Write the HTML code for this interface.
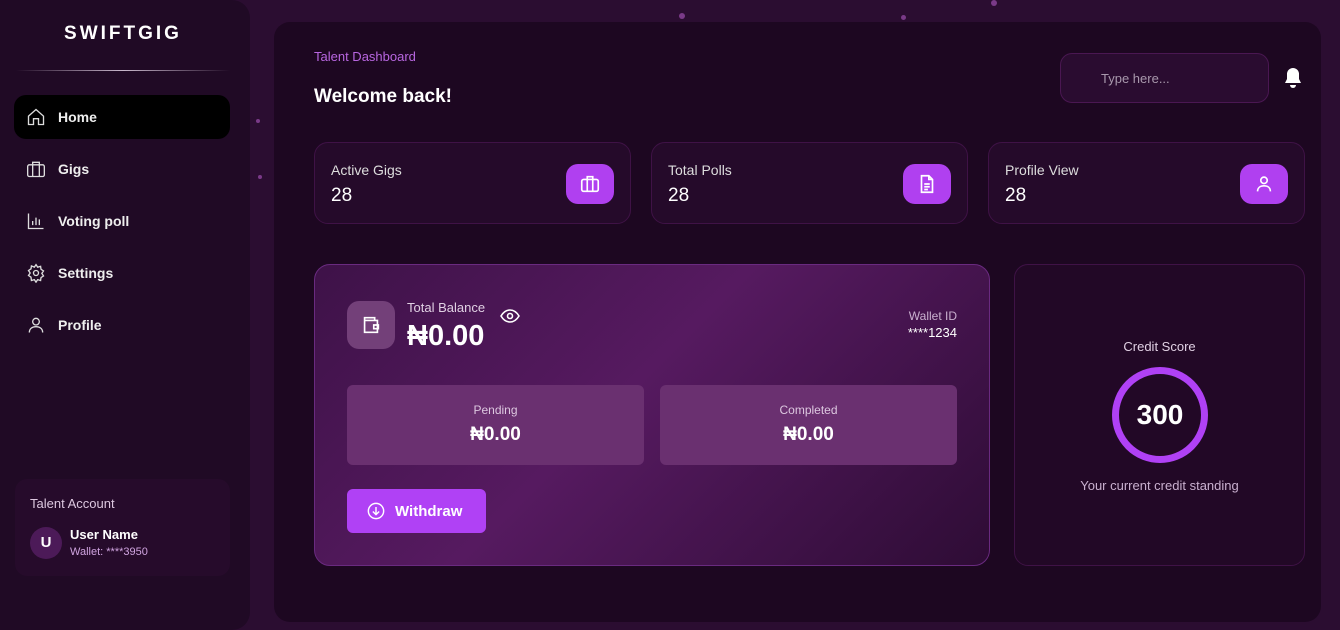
<!DOCTYPE html>
<html><head><style>
*{box-sizing:border-box;margin:0;padding:0}
body{width:1340px;height:597px;overflow:hidden;background:#2b0d31;font-family:"Liberation Sans",sans-serif;color:#fff;position:relative}
.side{position:absolute;left:0;top:0;width:250px;height:630px;background:#200a25;border-radius:0 18px 18px 0}
.logo{position:absolute;top:23px;left:0;width:246px;text-align:center;font-weight:bold;font-size:19px;letter-spacing:3px}
.line{position:absolute;top:70px;left:16px;width:214px;height:1px;background:linear-gradient(90deg,transparent,#c9b8cc,transparent)}
.nav{position:absolute;left:14px;width:216px;height:44px;border-radius:12px;display:flex;align-items:center;padding-left:12px;font-weight:bold;font-size:14px;color:#eee}
.nav svg{width:20px;height:20px;margin-right:12px;fill:none;stroke:#ddd;stroke-width:1.6}
.acct{position:absolute;left:15px;top:479px;width:215px;height:97px;background:#260b2b;border-radius:12px}
.main{position:absolute;left:274px;top:22px;width:1047px;height:600px;background:#1d0721;border-radius:16px}
.card{position:absolute;border:1px solid #3f1246;border-radius:14px;background:#250a2a}
.ic{position:absolute;width:48px;height:40px;border-radius:12px;background:#b040f0;display:flex;align-items:center;justify-content:center}
.ic svg{width:22px;height:22px;fill:none;stroke:#fff;stroke-width:1.8}
.dot{position:absolute;border-radius:50%;background:#7a3a88}
</style></head><body>
<div class="dot" style="left:679px;top:13px;width:6px;height:6px"></div>
<div class="dot" style="left:901px;top:15px;width:5px;height:5px"></div>
<div class="dot" style="left:991px;top:0px;width:6px;height:6px"></div>
<div class="dot" style="left:256px;top:119px;width:4px;height:4px"></div>
<div class="dot" style="left:258px;top:175px;width:4px;height:4px"></div>
<div class="side">
<div class="logo">SWIFTGIG</div>
<div class="line"></div>
<div class="nav" style="top:95px;background:#000"><svg viewBox="0 0 24 24"><path d="M3 11l9-8 9 8v10h-6v-7H9v7H3z"/></svg>Home</div>
<div class="nav" style="top:147px"><svg viewBox="0 0 24 24"><rect x="2" y="7" width="20" height="14" rx="2"/><path d="M8 7V4h8v3M8 7v14M16 7v14"/></svg>Gigs</div>
<div class="nav" style="top:199px"><svg viewBox="0 0 24 24"><path d="M3 3v18h18M8 17v-5M12 17V8M16 17v-7"/></svg>Voting poll</div>
<div class="nav" style="top:251px"><svg viewBox="0 0 24 24"><circle cx="12" cy="12" r="3"/><path d="M12 2l2 3 3.5-1 .5 3.5 3 2-2 3 2 3-3 2-.5 3.5-3.5-1-2 3-2-3-3.5 1L6 17l-3-2 2-3-2-3 3-2 .5-3.5L10 5z"/></svg>Settings</div>
<div class="nav" style="top:303px"><svg viewBox="0 0 24 24"><circle cx="12" cy="8" r="4"/><path d="M4 21c0-5 4-7 8-7s8 2 8 7"/></svg>Profile</div>
<div class="acct">
<div style="position:absolute;left:15px;top:17px;font-size:13px;color:#ddc8e0">Talent Account</div>
<div style="position:absolute;left:15px;top:48px;width:32px;height:32px;border-radius:50%;background:#4c1a58;text-align:center;line-height:32px;font-weight:bold;font-size:15px">U</div>
<div style="position:absolute;left:55px;top:48px;font-weight:bold;font-size:13px">User Name</div>
<div style="position:absolute;left:55px;top:67px;font-size:11px;color:#d0a4e0">Wallet: ****3950</div>
</div>
</div>
<div class="main">
<div style="position:absolute;left:40px;top:27px;font-size:13px;color:#b866e0">Talent Dashboard</div>
<div style="position:absolute;left:40px;top:64px;font-size:19px;font-weight:bold">Welcome back!</div>
<div style="position:absolute;left:786px;top:31px;width:209px;height:50px;border:1px solid #4a1752;border-radius:12px;background:#2a0c30;padding:17px 0 0 40px;font-size:13px;color:#a898ac">Type here...</div>
<svg style="position:absolute;left:1009px;top:45px" width="20" height="22" viewBox="0 0 20 22"><path d="M10 1a6 6 0 0 0-6 6v5l-2 4h16l-2-4V7a6 6 0 0 0-6-6z" fill="#fff"/><path d="M7 18a3 3 0 0 0 6 0z" fill="#fff"/></svg>
<div class="card" style="left:40px;top:120px;width:317px;height:82px"><div style="position:absolute;left:16px;top:19px;font-size:14px;color:#ddd">Active Gigs</div><div style="position:absolute;left:16px;top:42px;font-size:19px">28</div><div class="ic" style="left:251px;top:21px"><svg viewBox="0 0 24 24"><rect x="3" y="7" width="18" height="13" rx="2"/><path d="M9 7V4h6v3M9 7v13M15 7v13"/></svg></div></div>
<div class="card" style="left:377px;top:120px;width:317px;height:82px"><div style="position:absolute;left:16px;top:19px;font-size:14px;color:#ddd">Total Polls</div><div style="position:absolute;left:16px;top:42px;font-size:19px">28</div><div class="ic" style="left:251px;top:21px"><svg viewBox="0 0 24 24"><path d="M6 3h8l4 4v14H6z M14 3v4h4M9 12h6M9 15h6M9 18h4"/></svg></div></div>
<div class="card" style="left:714px;top:120px;width:317px;height:82px"><div style="position:absolute;left:16px;top:19px;font-size:14px;color:#ddd">Profile View</div><div style="position:absolute;left:16px;top:42px;font-size:19px">28</div><div class="ic" style="left:251px;top:21px"><svg viewBox="0 0 24 24"><circle cx="12" cy="8" r="3.5"/><path d="M5 20c0-4 3-6 7-6s7 2 7 6"/></svg></div></div>
<div style="position:absolute;left:40px;top:242px;width:676px;height:302px;border:1px solid #6a2a80;border-radius:16px;background:linear-gradient(135deg,#3e1248,#561a60 45%,#2e0c35)">
<div style="position:absolute;left:32px;top:36px;width:48px;height:48px;border-radius:12px;background:#734079;display:flex;align-items:center;justify-content:center"><svg width="22" height="22" viewBox="0 0 24 24" fill="none" stroke="#fff" stroke-width="1.8"><path d="M5 4h11v3H5zM5 7h14v13H5zM15 12h5v4h-5z"/></svg></div>
<div style="position:absolute;left:92px;top:35px;font-size:13px;color:#e0d0e3">Total Balance</div>
<div style="position:absolute;left:92px;top:55px;font-size:29px;font-weight:bold">₦0.00</div>
<svg style="position:absolute;left:185px;top:43px" width="20" height="16" viewBox="0 0 20 16" fill="none" stroke="#fff" stroke-width="1.6"><path d="M1 8c3-5 6-6 9-6s6 1 9 6c-3 5-6 6-9 6s-6-1-9-6z"/><circle cx="10" cy="8" r="2.5"/></svg>
<div style="position:absolute;right:32px;top:44px;font-size:12px;color:#c9b0cf">Wallet ID</div>
<div style="position:absolute;right:32px;top:60px;font-size:13px">****1234</div>
<div style="position:absolute;left:32px;top:120px;width:297px;height:80px;border-radius:6px;background:#6a3070;text-align:center"><div style="margin-top:18px;font-size:12px;color:#ddc8e0">Pending</div><div style="margin-top:7px;font-size:19px;font-weight:bold">₦0.00</div></div>
<div style="position:absolute;left:345px;top:120px;width:297px;height:80px;border-radius:6px;background:#6a3070;text-align:center"><div style="margin-top:18px;font-size:12px;color:#ddc8e0">Completed</div><div style="margin-top:7px;font-size:19px;font-weight:bold">₦0.00</div></div>
<div style="position:absolute;left:32px;top:224px;width:139px;height:44px;border-radius:6px;background:#b041f5;display:flex;align-items:center;padding-left:20px;font-weight:bold;font-size:15px"><svg width="18" height="18" viewBox="0 0 20 20" fill="none" stroke="#fff" stroke-width="1.6" style="margin-right:10px"><circle cx="10" cy="10" r="8.5"/><path d="M10 5.5v8M6.5 10.5l3.5 3.5 3.5-3.5"/></svg>Withdraw</div>
</div>
<div class="card" style="left:740px;top:242px;width:291px;height:302px;background:#220826">
<div style="position:absolute;top:74px;width:100%;text-align:center;font-size:13px;color:#e0d0e3">Credit Score</div>
<div style="position:absolute;left:97px;top:102px;width:96px;height:96px;border-radius:50%;border:7px solid #b041f5;text-align:center;line-height:82px;font-size:28px;font-weight:bold">300</div>
<div style="position:absolute;top:213px;width:100%;text-align:center;font-size:13px;color:#c9b0cf">Your current credit standing</div>
</div>
</div>
</body></html>
